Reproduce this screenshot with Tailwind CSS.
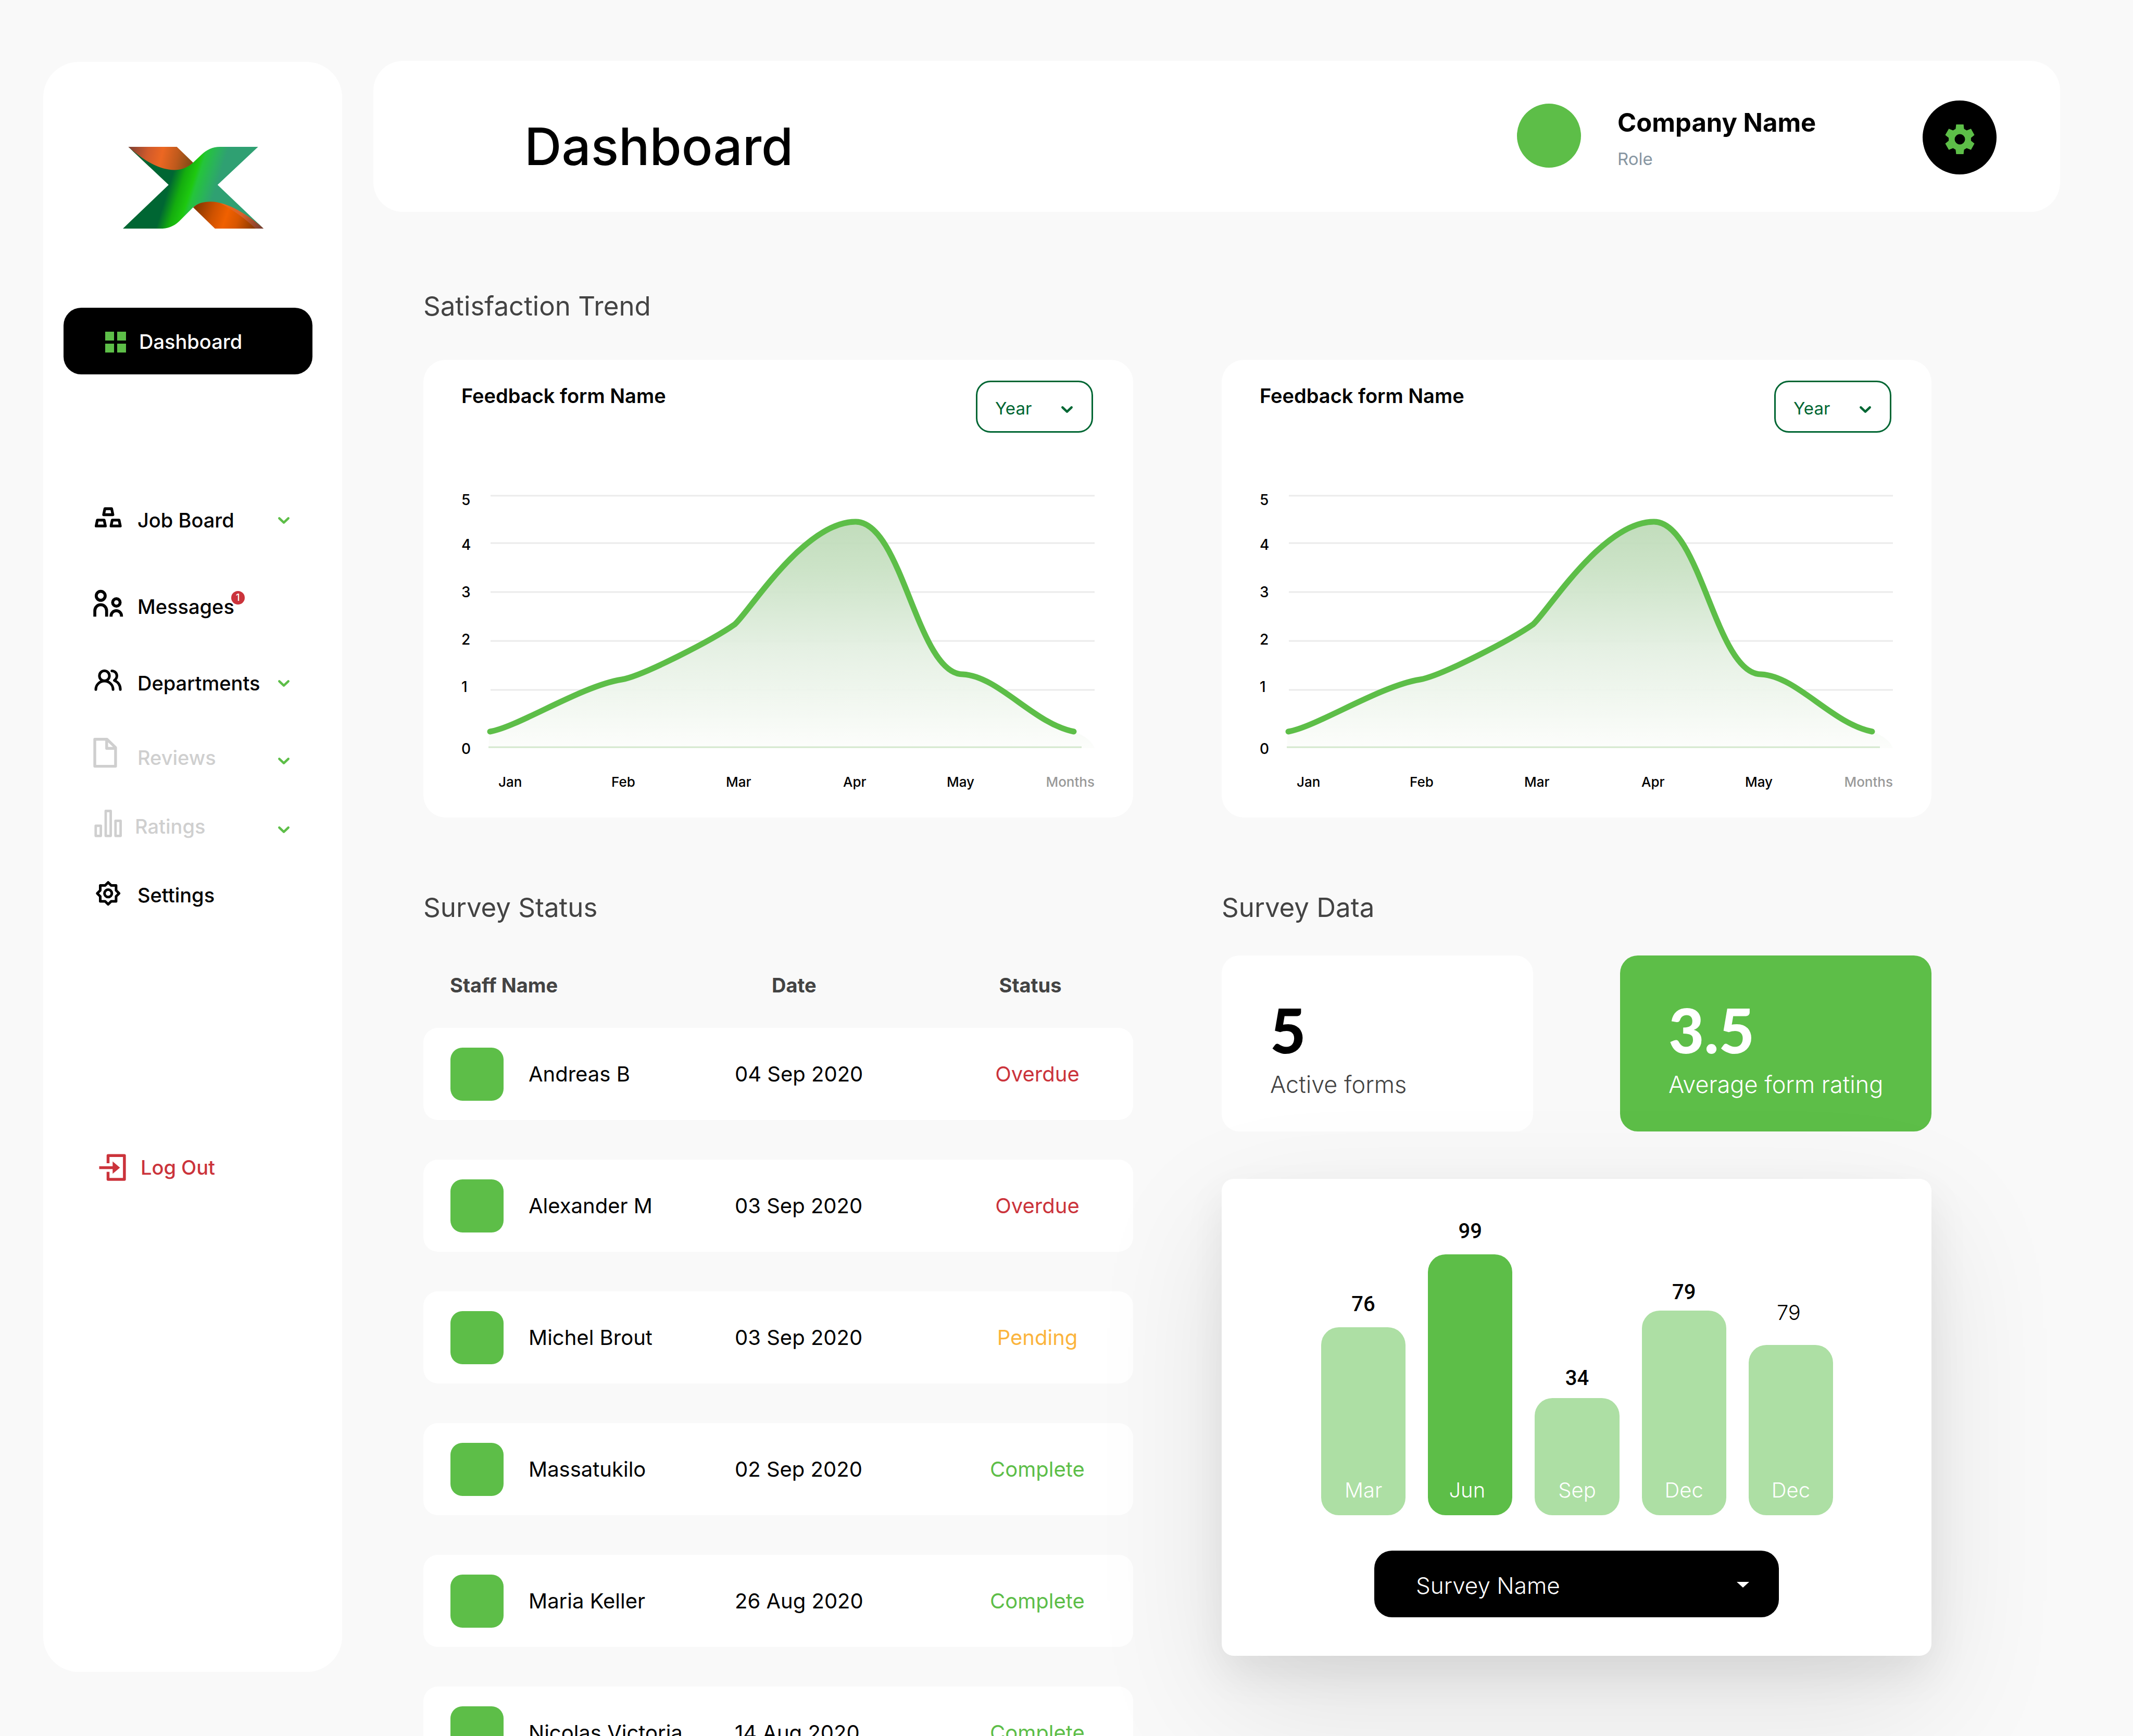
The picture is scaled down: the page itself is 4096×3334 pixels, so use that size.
<!DOCTYPE html>
<html lang="en">
<head>
<meta charset="utf-8">
<meta name="viewport" content="width=device-width, initial-scale=1">
<title>Dashboard</title>
<script src="https://cdn.jsdelivr.net/npm/@tailwindcss/browser@4"></script>
</head>
<body class="flex h-screen gap-[60px] overflow-hidden bg-[#f9f9f9] pr-[140px] pl-[83px] font-['Inter',sans-serif] text-black">

<!-- Sidebar -->
<aside class="mt-[119px] mb-[123px] flex w-[574px] shrink-0 flex-col rounded-[68px] bg-white">
  <a href="#" aria-label="Home" class="mt-[163px] ml-[153px] block h-[157px] w-[270px]">
    <svg viewBox="428 446 701 385" preserveAspectRatio="none" class="h-full w-full">
      <defs>
        <linearGradient id="band" gradientUnits="userSpaceOnUse" x1="635" y1="700" x2="850" y2="771">
          <stop offset="0" stop-color="#006633"/><stop offset=".25" stop-color="#14ad0e"/><stop offset=".47" stop-color="#1ec80f"/><stop offset=".56" stop-color="#24c53a"/><stop offset=".8" stop-color="#2ab25c"/><stop offset="1" stop-color="#2fa072"/>
        </linearGradient>
        <linearGradient id="topArm" gradientUnits="userSpaceOnUse" x1="455" y1="450" x2="775" y2="525">
          <stop offset="0" stop-color="#7c3f33"/><stop offset=".3" stop-color="#d05a2b"/><stop offset=".52" stop-color="#ec6722"/><stop offset=".75" stop-color="#c05a1c"/><stop offset="1" stop-color="#7c4a16"/>
        </linearGradient>
        <linearGradient id="lowArm" gradientUnits="userSpaceOnUse" x1="800" y1="715" x2="1080" y2="815">
          <stop offset="0" stop-color="#8a3800"/><stop offset=".3" stop-color="#cf5200"/><stop offset=".52" stop-color="#f06000"/><stop offset=".72" stop-color="#d85600"/><stop offset="1" stop-color="#8f3b00"/>
        </linearGradient>
        <linearGradient id="lowEdge" gradientUnits="userSpaceOnUse" x1="910" y1="708" x2="1129" y2="831">
          <stop offset="0" stop-color="#f06c14"/><stop offset=".5" stop-color="#d9602a"/><stop offset="1" stop-color="#703a30"/>
        </linearGradient>
      </defs>
      <path fill="url(#topArm)" d="M455 446H697L780 522L760 550L685 560L560 540z"/>
      <path fill="url(#lowArm)" d="M778 731C800 710 830 701 865 701C955 701 1062 768 1129 831H887z"/>
      <path fill="url(#lowEdge)" d="M905 706C995 714 1073 779 1129 831H1090C1040 786 980 745 905 706z"/>
      <path fill="url(#band)" d="M455 446L656 625L428 831H612C650 831 680 822 708 797L778 731C800 712 830 704 865 704C950 704 1060 770 1129 831L900 625L1102 446H912C875 446 845 460 820 483L778 520C750 545 715 555 685 555C600 555 520 500 455 446z"/>
    </svg>
  </a>

  <a href="#" aria-current="page" class="mt-[152px] ml-[39px] flex h-32 w-[478px] items-center gap-[25px] rounded-[34px] bg-black pt-[3px] pl-20 text-[38px] font-medium text-white">
    <svg viewBox="0 0 40 40" class="h-10 w-10" fill="#5dbe48"><path d="M0 0h17v17H0zM23 0h17v17H23zM0 23h17v17H0zM23 23h17v17H23z"/></svg>
    Dashboard
  </a>

  <nav class="mt-[250px] flex flex-col pr-[101px] pl-24 text-[38px] leading-[60px] font-medium">
    <a href="#" class="flex h-[60px] items-center gap-[25px]">
      <svg viewBox="0 0 60 60" class="h-[60px] w-[60px] shrink-0 overflow-visible" fill="none" stroke="currentColor" stroke-width="5.3" stroke-linejoin="round"><path d="M22.4 8h13l2.4 11.5H20zM8 29.8h13l2.4 11.4H5.6zM36.6 29.8h13L52 41.2H34.2z"/></svg>
      Job Board
      <svg viewBox="0 0 22 13" class="ml-auto h-[13px] w-[22px] overflow-visible" fill="none" stroke="#5dbe48" stroke-width="4.5" stroke-linecap="round" stroke-linejoin="round"><path d="M2.3 2.3L11 10.6L19.7 2.3"/></svg>
    </a>
    <a href="#" class="mt-[106px] flex h-[60px] items-center gap-[25px]">
      <svg viewBox="0 0 60 60" class="h-[60px] w-[60px] shrink-0 overflow-visible" fill="none" stroke="currentColor" stroke-width="5.7"><circle cx="14.4" cy="9.3" r="8.6"/><path d="M3.1 49.2V37.7a11.3 11.3 0 0 1 22.6 0V49.2"/><circle cx="44.5" cy="22" r="7.2"/><path d="M34.3 49.2V47.8a10 10 0 0 1 20 0v1.4"/></svg>
      <span class="relative">Messages<span class="absolute top-0 left-full -ml-[6px] flex h-[26px] w-[26px] items-center justify-center rounded-full bg-[#cb333b] text-[18px] leading-none font-medium text-white">1</span></span>
    </a>
    <a href="#" class="mt-[87px] flex h-[60px] items-center gap-[25px]">
      <svg viewBox="0 0 60 60" class="h-[60px] w-[60px] shrink-0 overflow-visible" fill="none" stroke="currentColor" stroke-width="5" stroke-linecap="round" stroke-linejoin="round"><circle cx="21.5" cy="15.9" r="9.6"/><path d="M5 42.2c0-9 7.4-16.2 16.5-16.2s16.6 7.2 16.6 16.2M35.8 6.5c5.5 0 9.6 4.3 9.6 9.6 0 3.8-1.8 6.5-4.8 8.6 7 3.1 11.5 9.5 11.5 17.5"/></svg>
      Departments
      <svg viewBox="0 0 22 13" class="ml-auto h-[13px] w-[22px] overflow-visible" fill="none" stroke="#5dbe48" stroke-width="4.5" stroke-linecap="round" stroke-linejoin="round"><path d="M2.3 2.3L11 10.6L19.7 2.3"/></svg>
    </a>
    <a href="#" class="mt-[83px] flex h-[60px] items-center gap-[25px] text-[#cfcfcf]">
      <svg viewBox="0 0 60 60" class="h-[60px] w-[60px] shrink-0 overflow-visible" fill="none" stroke="currentColor" stroke-width="5.4" stroke-linejoin="round"><path d="M3-5.2H26.4L42.9 10.6V46.6H3zM25.8-5V12.2H42.9"/></svg>
      Reviews
      <svg viewBox="0 0 22 13" class="mt-3 ml-auto h-[13px] w-[22px] overflow-visible" fill="none" stroke="#5dbe48" stroke-width="4.5" stroke-linecap="round" stroke-linejoin="round"><path d="M2.3 2.3L11 10.6L19.7 2.3"/></svg>
    </a>
    <a href="#" class="mt-[72px] flex h-[60px] items-center gap-5 text-[#cfcfcf]">
      <svg viewBox="0 0 60 60" class="h-[60px] w-[60px] shrink-0 overflow-visible" fill="none" stroke="currentColor" stroke-width="4.8" stroke-linejoin="round"><path d="M4.8 28.8h9.8v19.5H4.8zM24 .5h9.6v47.8H24zM42.8 19.3h9.8v29H42.8z"/></svg>
      Ratings
      <svg viewBox="0 0 22 13" class="mt-3 ml-auto h-[13px] w-[22px] overflow-visible" fill="none" stroke="#5dbe48" stroke-width="4.5" stroke-linecap="round" stroke-linejoin="round"><path d="M2.3 2.3L11 10.6L19.7 2.3"/></svg>
    </a>
    <a href="#" class="mt-[72px] flex h-[60px] items-center gap-[25px]">
      <svg viewBox="-28.7 -26.7 60 60" class="h-[60px] w-[60px] shrink-0 overflow-visible" fill="none" stroke="currentColor" stroke-width="5" stroke-linejoin="round"><path d="M5.8-15.2H15.2V-5.8L21 0L15.2 5.8V15.2H5.8L0 21L-5.8 15.2H-15.2V5.8L-21 0L-15.2-5.8V-15.2H-5.8L0-21z"/><circle r="7.1"/></svg>
      Settings
    </a>
    <a href="#" class="mt-[463px] flex h-[60px] items-center gap-[31px] text-[#cb333b]">
      <svg viewBox="0 0 60 60" class="h-[60px] w-[60px] shrink-0 overflow-visible" fill="none" stroke="currentColor" stroke-width="5.5" stroke-linejoin="round"><path d="M28.5 22V7.2H59.9V52.9H28.5V38.6M11.5 30.4H38"/><path d="M37.3 18.6L51.4 30.4L37.3 42.2z" fill="currentColor" stroke="none"/></svg>
      Log Out
    </a>
  </nav>
</aside>

<main class="min-w-0 flex-1 pt-[117px]">
  <!-- Top bar -->
  <header class="flex h-[290px] items-start rounded-[57px] bg-white pt-[76px] pr-[122px] pl-[290px]">
    <h1 class="pt-7 text-[99px] leading-[120px] font-medium">Dashboard</h1>
    <div class="mt-[6px] ml-auto h-[123px] w-[123px] rounded-full bg-[#5dbe48]"></div>
    <div class="w-[656px] pt-[13px] pl-[70px]">
      <p class="text-[49px] leading-[60px] font-bold">Company Name</p>
      <p class="mt-[17px] text-[33px] leading-[44px] text-[#8796a2]">Role</p>
    </div>
    <button type="button" aria-label="Settings" class="flex h-[142px] w-[142px] items-center justify-center rounded-full bg-black pt-[6px]">
      <svg viewBox="216 228 240 240" class="h-[57px] w-[57px]" fill="#5dbe48" fill-rule="evenodd"><path d="M306 228H366L370 264L391 276L426 263L454 313L426 336V360L454 383L426 433L391 420L370 432L366 468H306L302 432L281 420L247 433L218 383L246 360V336L218 313L247 263L281 276L302 264zM336 306a42 42 0 1 0 0 84a42 42 0 1 0 0-84z"/></svg>
    </button>
  </header>

  <div class="pr-[247px] pl-24">
    <!-- Satisfaction trend -->
    <section>
      <h2 class="mt-[149px] text-[51px] leading-[64px] text-[#434343]">Satisfaction Trend</h2>
      <div class="mt-[71px] grid grid-cols-2 gap-[170px]">
        <article class="rounded-[43px] bg-white pt-10">
          <div class="flex items-start justify-between pr-[77px] pl-[73px]">
            <h3 class="text-[38px] leading-[58px] font-semibold">Feedback form Name</h3>
            <div class="relative">
              <select aria-label="Period" class="h-[100px] w-[225px] appearance-none rounded-[28px] border-3 border-[#006633] bg-white pt-2 pl-[34px] text-[33px] text-[#006633]"><option>Year</option></select>
              <svg viewBox="0 0 22 13" class="pointer-events-none absolute top-[49px] right-[39px] h-[13px] w-[22px] overflow-visible" fill="none" stroke="#006633" stroke-width="4.5" stroke-linecap="round" stroke-linejoin="round"><path d="M2.3 2.3L11 10.6L19.7 2.3"/></svg>
            </div>
          </div>
          <svg viewBox="0 0 1363 739" class="block w-full" fill="none" font-weight="500">
            <defs><linearGradient id="area1" x1="0" y1="0" x2="0" y2="1"><stop offset="0" stop-color="#bddab7"/><stop offset=".2" stop-color="#c8e1c3"/><stop offset=".55" stop-color="#e3efe1"/><stop offset="1" stop-color="#fcfdfb"/></linearGradient></defs>
            <path stroke="#ebebeb" stroke-width="3" d="M129 121H1289M129 212H1289M129 306H1289M129 400H1289M129 494H1289"/>
            <path fill="url(#area1)" fill-opacity=".93" d="M127 574C181 565 303 486 380 474C421 467 557 397 598 368C632 338 738 174 830 173C920 173 948 464 1036 464C1105 468 1171 558 1249 574C1262 578 1284 590 1289 606H125z"/>
            <path stroke="#d3e8cd" stroke-width="3" d="M125 604H1264"/>
            <path stroke="#5dbe48" stroke-width="11" stroke-linecap="round" stroke-linejoin="round" d="M128 574C182 565 304 486 381 474C422 467 557 397 598 368C625 345 731 171 830 171C920 171 948 464 1036 464C1105 468 1171 558 1249 574"/>
            <g fill="#000" font-size="28"><text x="73" y="139">5</text><text x="73" y="225">4</text><text x="73" y="316">3</text><text x="73" y="407">2</text><text x="73" y="498">1</text><text x="73" y="617">0</text></g>
            <g fill="#000" font-size="26"><text x="144" y="680">Jan</text><text x="361" y="680">Feb</text><text x="581" y="680">Mar</text><text x="806" y="680">Apr</text><text x="1005" y="680">May</text><text x="1289" y="680" text-anchor="end" fill="#999">Months</text></g>
          </svg>
        </article>
        <article class="rounded-[43px] bg-white pt-10">
          <div class="flex items-start justify-between pr-[77px] pl-[73px]">
            <h3 class="text-[38px] leading-[58px] font-semibold">Feedback form Name</h3>
            <div class="relative">
              <select aria-label="Period" class="h-[100px] w-[225px] appearance-none rounded-[28px] border-3 border-[#006633] bg-white pt-2 pl-[34px] text-[33px] text-[#006633]"><option>Year</option></select>
              <svg viewBox="0 0 22 13" class="pointer-events-none absolute top-[49px] right-[39px] h-[13px] w-[22px] overflow-visible" fill="none" stroke="#006633" stroke-width="4.5" stroke-linecap="round" stroke-linejoin="round"><path d="M2.3 2.3L11 10.6L19.7 2.3"/></svg>
            </div>
          </div>
          <svg viewBox="0 0 1363 739" class="block w-full" fill="none" font-weight="500">
            <defs><linearGradient id="area2" x1="0" y1="0" x2="0" y2="1"><stop offset="0" stop-color="#bddab7"/><stop offset=".2" stop-color="#c8e1c3"/><stop offset=".55" stop-color="#e3efe1"/><stop offset="1" stop-color="#fcfdfb"/></linearGradient></defs>
            <path stroke="#ebebeb" stroke-width="3" d="M129 121H1289M129 212H1289M129 306H1289M129 400H1289M129 494H1289"/>
            <path fill="url(#area2)" fill-opacity=".93" d="M127 574C181 565 303 486 380 474C421 467 557 397 598 368C632 338 738 174 830 173C920 173 948 464 1036 464C1105 468 1171 558 1249 574C1262 578 1284 590 1289 606H125z"/>
            <path stroke="#d3e8cd" stroke-width="3" d="M125 604H1264"/>
            <path stroke="#5dbe48" stroke-width="11" stroke-linecap="round" stroke-linejoin="round" d="M128 574C182 565 304 486 381 474C422 467 557 397 598 368C625 345 731 171 830 171C920 171 948 464 1036 464C1105 468 1171 558 1249 574"/>
            <g fill="#000" font-size="28"><text x="73" y="139">5</text><text x="73" y="225">4</text><text x="73" y="316">3</text><text x="73" y="407">2</text><text x="73" y="498">1</text><text x="73" y="617">0</text></g>
            <g fill="#000" font-size="26"><text x="144" y="680">Jan</text><text x="361" y="680">Feb</text><text x="581" y="680">Mar</text><text x="806" y="680">Apr</text><text x="1005" y="680">May</text><text x="1289" y="680" text-anchor="end" fill="#999">Months</text></g>
          </svg>
        </article>
      </div>
    </section>

    <div class="mt-[141px] grid grid-cols-2 items-start gap-[170px]">
      <!-- Survey status -->
      <section>
        <h2 class="text-[51px] leading-[64px] text-[#434343]">Survey Status</h2>
        <table class="mt-[93px] block text-[40px]">
          <thead class="block text-left text-[38px] leading-[48px] text-[#434343]">
            <tr class="grid grid-cols-[600fr_395fr_368fr]"><th class="pl-[51px] font-bold">Staff Name</th><th class="pl-[69px] font-bold">Date</th><th class="pr-[27px] text-center font-bold">Status</th></tr>
          </thead>
          <tbody class="mt-[58px] flex flex-col gap-[76px]">
            <tr class="grid h-[177px] grid-cols-[598fr_397fr_368fr] items-center rounded-[28px] bg-white"><td class="flex items-center gap-12 pl-[52px]"><span class="h-[102px] w-[102px] rounded-[23px] bg-[#5dbe48]"></span>Andreas B</td><td>04 Sep 2020</td><td class="text-center text-[#cb333b]">Overdue</td></tr>
            <tr class="grid h-[177px] grid-cols-[598fr_397fr_368fr] items-center rounded-[28px] bg-white"><td class="flex items-center gap-12 pl-[52px]"><span class="h-[102px] w-[102px] rounded-[23px] bg-[#5dbe48]"></span>Alexander M</td><td>03 Sep 2020</td><td class="text-center text-[#cb333b]">Overdue</td></tr>
            <tr class="grid h-[177px] grid-cols-[598fr_397fr_368fr] items-center rounded-[28px] bg-white"><td class="flex items-center gap-12 pl-[52px]"><span class="h-[102px] w-[102px] rounded-[23px] bg-[#5dbe48]"></span>Michel Brout</td><td>03 Sep 2020</td><td class="text-center text-[#fbb43c]">Pending</td></tr>
            <tr class="grid h-[177px] grid-cols-[598fr_397fr_368fr] items-center rounded-[28px] bg-white"><td class="flex items-center gap-12 pl-[52px]"><span class="h-[102px] w-[102px] rounded-[23px] bg-[#5dbe48]"></span>Massatukilo</td><td>02 Sep 2020</td><td class="text-center text-[#5dbe48]">Complete</td></tr>
            <tr class="grid h-[177px] grid-cols-[598fr_397fr_368fr] items-center rounded-[28px] bg-white"><td class="flex items-center gap-12 pl-[52px]"><span class="h-[102px] w-[102px] rounded-[23px] bg-[#5dbe48]"></span>Maria Keller</td><td>26 Aug 2020</td><td class="text-center text-[#5dbe48]">Complete</td></tr>
            <tr class="grid h-[177px] grid-cols-[598fr_397fr_368fr] items-center rounded-[28px] bg-white"><td class="flex items-center gap-12 pl-[52px]"><span class="h-[102px] w-[102px] rounded-[23px] bg-[#5dbe48]"></span>Nicolas Victoria</td><td>14 Aug 2020</td><td class="text-center text-[#5dbe48]">Complete</td></tr>
          </tbody>
        </table>
      </section>

      <!-- Survey data -->
      <section>
        <h2 class="text-[51px] leading-[64px] text-[#434343]">Survey Data</h2>
        <div class="mt-[60px] grid grid-cols-2 gap-[167px]">
          <div class="h-[338px] rounded-[34px] bg-white pt-[83px] pl-[93px]">
            <p class="font-['Lato',sans-serif] text-[118px] leading-[120px] font-black">5</p>
            <p class="mt-[17px] text-[45px] leading-[56px] font-light text-[#434343]">Active forms</p>
          </div>
          <div class="h-[338px] rounded-[34px] bg-[#5dbe48] pt-[83px] pl-[93px] whitespace-nowrap text-white">
            <p class="font-['Lato',sans-serif] text-[118px] leading-[120px] font-black">3.5</p>
            <p class="mt-[17px] text-[45px] leading-[56px] font-light">Average form rating</p>
          </div>
        </div>

        <div class="relative mt-[91px] rounded-[23px] bg-white pb-[74px] shadow-[0_34px_80px_rgba(0,0,0,0.07),0_90px_360px_rgba(0,0,0,0.1)]">
          <div class="flex h-[646px] items-end gap-[43px] pr-[189px] pl-[191px] text-center text-[40px] leading-[48px]">
            <div class="flex-1"><p class="mb-5 font-['Roboto',sans-serif] font-medium">76</p><div class="flex h-[361px] items-end justify-center rounded-[34px] bg-[#addfa4] pb-6 font-light text-white">Mar</div></div>
            <div class="flex-1"><p class="mb-5 font-['Roboto',sans-serif] font-medium">99</p><div class="flex h-[501px] items-end justify-center rounded-[34px] bg-[#5dbe48] pr-3 pb-6 font-light text-white">Jun</div></div>
            <div class="flex-1"><p class="mb-[14px] font-['Roboto',sans-serif] font-medium">34</p><div class="flex h-[225px] items-end justify-center rounded-[34px] bg-[#addfa4] pb-6 font-light text-white">Sep</div></div>
            <div class="flex-1"><p class="mb-[11px] font-['Roboto',sans-serif] font-medium">79</p><div class="flex h-[393px] items-end justify-center rounded-[34px] bg-[#addfa4] pb-6 font-light text-white">Dec</div></div>
            <div class="flex-1"><p class="mb-[38px] pr-2 font-light">79</p><div class="flex h-[327px] items-end justify-center rounded-[34px] bg-[#addfa4] pb-6 font-light text-white">Dec</div></div>
          </div>
          <div class="relative mx-auto mt-[68px] w-[777px]">
            <select aria-label="Survey" class="block h-32 w-full appearance-none rounded-[34px] bg-black pt-[6px] pl-20 text-[44px] font-light text-white"><option>Survey Name</option></select>
            <svg viewBox="0 0 24 11" class="pointer-events-none absolute top-[60px] right-[57px] h-[11px] w-6" fill="#fff"><path d="M0 0h24L12 11z"/></svg>
          </div>
        </div>
      </section>
    </div>
  </div>
</main>
</body>
</html>
